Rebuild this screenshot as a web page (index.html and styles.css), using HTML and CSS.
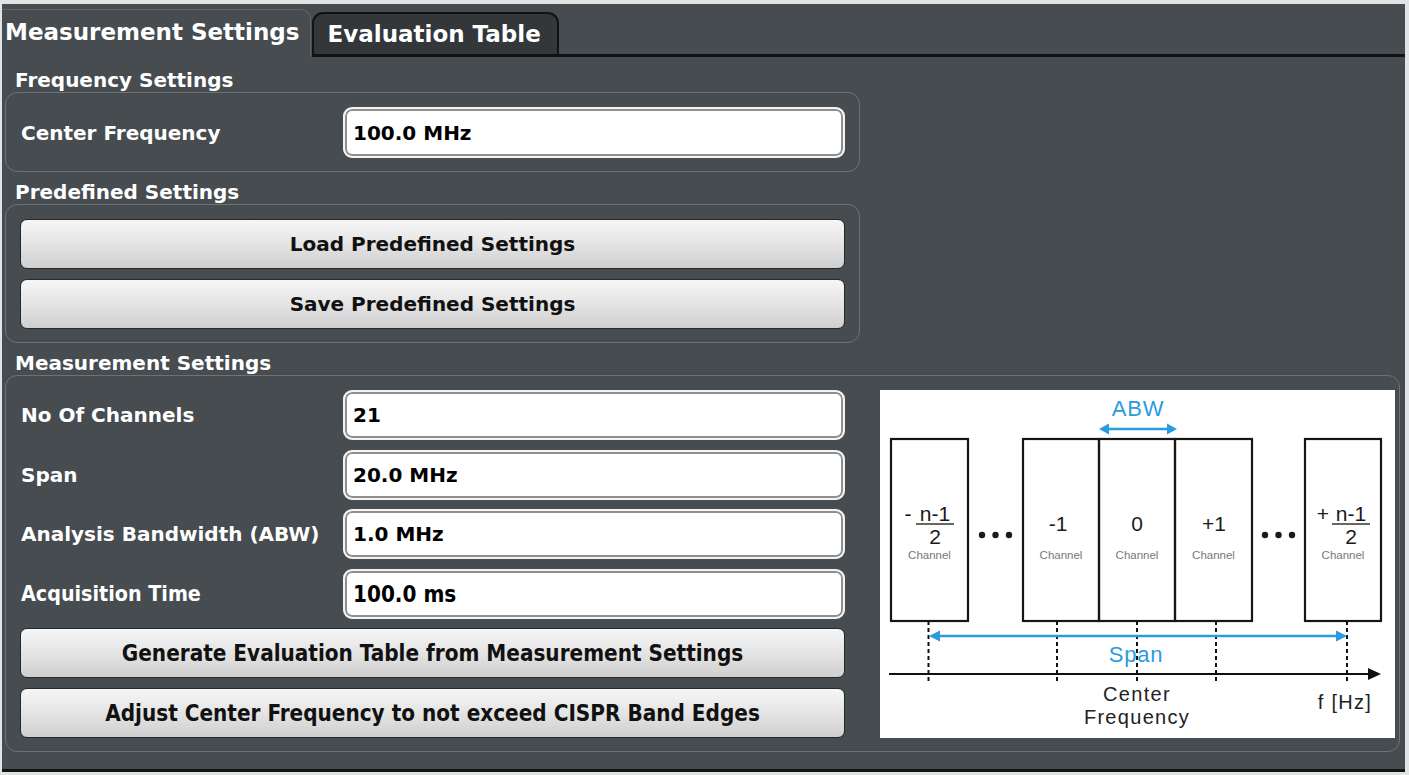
FILE: index.html
```html
<!DOCTYPE html>
<html lang="en">
<head>
    <meta charset="UTF-8">
    <title>Measurement Settings</title>
    <link rel="stylesheet" href="styles.css">
</head>
<body>
    <div class="window">
        <!-- Tab strip -->
        <div class="tabs">
            <div class="tab tab-active">Measurement Settings</div>
            <div class="tab tab-idle">Evaluation Table</div>
            <div class="tab-fill"></div>
        </div>

        <div class="content">
            <!-- Frequency -->
            <div class="section-title first">Frequency Settings</div>
            <div class="group group-narrow">
                <div class="row">
                    <div class="label">Center Frequency</div>
                    <div class="field">100.0 MHz</div>
                </div>
            </div>

            <!-- Predefined -->
            <div class="section-title">Predefined Settings</div>
            <div class="group group-narrow">
                <div class="stack">
                    <div class="button">Load Predefined Settings</div>
                    <div class="button">Save Predefined Settings</div>
                </div>
            </div>

            <!-- Measurement -->
            <div class="section-title">Measurement Settings</div>
            <div class="group group-wide">
                <div class="stack form">
                    <div class="row">
                        <div class="label">No Of Channels</div>
                        <div class="field">21</div>
                    </div>
                    <div class="row">
                        <div class="label">Span</div>
                        <div class="field">20.0 MHz</div>
                    </div>
                    <div class="row">
                        <div class="label">Analysis Bandwidth (ABW)</div>
                        <div class="field">1.0 MHz</div>
                    </div>
                    <div class="row">
                        <div class="label narrow-font">Acquisition Time</div>
                        <div class="field narrow-font">100.0 ms</div>
                    </div>
                    <div class="button narrow-font">Generate Evaluation Table from Measurement Settings</div>
                    <div class="button narrow-font">Adjust Center Frequency to not exceed CISPR Band Edges</div>
                </div>

                <svg class="diagram" width="515" height="348" viewBox="0 0 515 348">
                    <rect width="515" height="348" fill="#fff"/>

                    <!-- ABW arrow -->
                    <text class="dg-blue" x="258" y="26" text-anchor="middle">ABW</text>
                    <line class="dg-arrow" x1="226" y1="39" x2="290" y2="39"/>
                    <polygon class="dg-head" points="219,39 229,33.5 229,44.5"/>
                    <polygon class="dg-head" points="297,39 287,33.5 287,44.5"/>

                    <!-- channel boxes -->
                    <rect class="dg-box" x="11" y="49" width="77" height="182"/>
                    <rect class="dg-box" x="143" y="49" width="76" height="182"/>
                    <rect class="dg-box" x="219" y="49" width="76" height="182"/>
                    <rect class="dg-box" x="295" y="49" width="77" height="182"/>
                    <rect class="dg-box" x="425" y="49" width="76" height="182"/>

                    <!-- left edge channel -->
                    <text class="dg-num" x="28" y="131" text-anchor="middle">-</text>
                    <text class="dg-num" x="55" y="131" text-anchor="middle">n-1</text>
                    <line class="dg-frac" x1="36" y1="134" x2="74" y2="134"/>
                    <text class="dg-num" x="55" y="154" text-anchor="middle">2</text>
                    <text class="dg-small" x="49.5" y="169" text-anchor="middle">Channel</text>

                    <circle class="dg-dot" cx="102" cy="145" r="3.2"/>
                    <circle class="dg-dot" cx="115.5" cy="145" r="3.2"/>
                    <circle class="dg-dot" cx="129" cy="145" r="3.2"/>

                    <text class="dg-num" x="178" y="141" text-anchor="middle">-1</text>
                    <text class="dg-small" x="181" y="169" text-anchor="middle">Channel</text>
                    <text class="dg-num" x="257" y="141" text-anchor="middle">0</text>
                    <text class="dg-small" x="257" y="169" text-anchor="middle">Channel</text>
                    <text class="dg-num" x="334" y="141" text-anchor="middle">+1</text>
                    <text class="dg-small" x="333.5" y="169" text-anchor="middle">Channel</text>

                    <circle class="dg-dot" cx="385" cy="145" r="3.2"/>
                    <circle class="dg-dot" cx="398.5" cy="145" r="3.2"/>
                    <circle class="dg-dot" cx="412" cy="145" r="3.2"/>

                    <!-- right edge channel -->
                    <text class="dg-num" x="443" y="131" text-anchor="middle">+</text>
                    <text class="dg-num" x="471" y="131" text-anchor="middle">n-1</text>
                    <line class="dg-frac" x1="452" y1="134" x2="490" y2="134"/>
                    <text class="dg-num" x="471" y="154" text-anchor="middle">2</text>
                    <text class="dg-small" x="463" y="169" text-anchor="middle">Channel</text>

                    <!-- dashed channel centres -->
                    <line class="dg-dash" x1="48.5" y1="231" x2="48.5" y2="293"/>
                    <line class="dg-dash" x1="177" y1="231" x2="177" y2="293"/>
                    <line class="dg-dash" x1="257" y1="231" x2="257" y2="293"/>
                    <line class="dg-dash" x1="336" y1="231" x2="336" y2="293"/>
                    <line class="dg-dash" x1="467" y1="231" x2="467" y2="293"/>

                    <!-- span arrow -->
                    <line class="dg-arrow" x1="57" y1="246" x2="459" y2="246"/>
                    <polygon class="dg-head" points="49,246 60,240.5 60,251.5"/>
                    <polygon class="dg-head" points="467,246 456,240.5 456,251.5"/>
                    <text class="dg-blue" x="256" y="272" text-anchor="middle">Span</text>

                    <!-- frequency axis -->
                    <line class="dg-axis" x1="9" y1="284" x2="490" y2="284"/>
                    <polygon class="dg-ink" points="501,284 488,278 488,290"/>
                    <text class="dg-label" x="257" y="311" text-anchor="middle">Center</text>
                    <text class="dg-label" x="257" y="334" text-anchor="middle">Frequency</text>
                    <text class="dg-label" x="465" y="319" text-anchor="middle">f [Hz]</text>
                </svg>
            </div>
        </div>
    </div>
</body>
</html>
```

FILE: styles.css
```css
body {
    margin: 0;
    padding: 4px 4px 3px 2px;
    background-color: #e2e3e3;
    font-family: "DejaVu Sans", Verdana, sans-serif;
    font-weight: bold;
}
.window {
    height: 768px;
    box-sizing: border-box;
    background-color: #464c50;
    border-bottom: 3px solid #121416;
}

/* tabs */
.tabs {
    display: flex;
    align-items: flex-end;
    height: 53px;
}
.tab {
    display: flex;
    align-items: center;
    box-sizing: border-box;
    color: #fff;
    font-size: 23px;
    white-space: nowrap;
}
.tab-active {
    height: 48px;
    padding: 0 10px 3px 3px;
    border-top: 1px solid #5d6367;
    border-right: 1px solid #5d6367;
    border-top-right-radius: 10px;
}
.tab-idle {
    height: 45px;
    margin-left: 1px;
    padding: 0 16px 0 14px;
    background-color: #33373a;
    border: 2px solid #101214;
    border-bottom-width: 3px;
    border-radius: 11px 11px 0 0;
}
.tab-fill {
    flex: 1;
    border-bottom: 3px solid #101214;
}

/* body */
.content {
    padding: 3px 5px 0 3px;
}
.section-title {
    height: 32px;
    box-sizing: border-box;
    padding: 7px 0 0 10px;
    line-height: 26px;
    font-size: 20px;
    color: #fff;
}
.group {
    border: 1px solid #6c7276;
    border-radius: 12px;
    padding: 14px 14px 13px 14px;
}
.group-narrow {
    width: 855px;
    box-sizing: border-box;
}
.group-wide {
    display: flex;
    gap: 35px;
    padding-right: 4px;
}
.stack {
    display: flex;
    flex-direction: column;
    gap: 10px;
}
.form {
    width: 825px;
    gap: 9.6px;
}
.row {
    display: grid;
    grid-template-columns: 323px 1fr;
    align-items: center;
}
.label {
    padding-left: 1px;
    font-size: 20px;
    color: #fff;
}
.field {
    height: 50px;
    box-sizing: border-box;
    display: flex;
    align-items: center;
    padding-left: 8px;
    background-color: #fff;
    border: 2px solid #f4f4f4;
    border-radius: 9px;
    box-shadow: inset 0 0 0 2px #8f8f8f;
    font-size: 20px;
    color: #000;
}
.group-narrow .field {
    height: 51px;
}
.button {
    height: 50px;
    box-sizing: border-box;
    display: flex;
    align-items: center;
    justify-content: center;
    background: linear-gradient(#f6f6f6, #e4e4e4 50%, #cfcfcf);
    border: 1px solid #26292b;
    border-radius: 7px;
    font-size: 20px;
    color: #111;
}
.narrow-font {
    font-family: "DejaVu Sans Condensed", "DejaVu Sans", sans-serif;
    font-stretch: condensed;
    font-size: 22.3px;
}
.label.narrow-font {
    font-size: 21.3px;
}

/* diagram */
.diagram {
    display: block;
    flex: none;
}
.dg-box {
    fill: none;
    stroke: #161616;
    stroke-width: 2.2;
}
.dg-num {
    font: normal 21px "Liberation Sans", Arial, sans-serif;
    fill: #1a1a1a;
}
.dg-small {
    font: normal 11.5px "Liberation Sans", Arial, sans-serif;
    fill: #777;
}
.dg-label {
    font: normal 20px "Liberation Sans", Arial, sans-serif;
    letter-spacing: 1.3px;
    fill: #222;
}
.dg-blue {
    font: normal 22px "Liberation Sans", Arial, sans-serif;
    letter-spacing: 0.8px;
    fill: #2b9be0;
}
.dg-frac {
    stroke: #333;
    stroke-width: 1.5;
}
.dg-dot {
    fill: #1a1a1a;
}
.dg-arrow {
    stroke: #2b9be0;
    stroke-width: 2.5;
}
.dg-head {
    fill: #2b9be0;
}
.dg-dash {
    stroke: #111;
    stroke-width: 2;
    stroke-dasharray: 4 3;
}
.dg-axis {
    stroke: #111;
    stroke-width: 2;
}
.dg-ink {
    fill: #111;
}
```
